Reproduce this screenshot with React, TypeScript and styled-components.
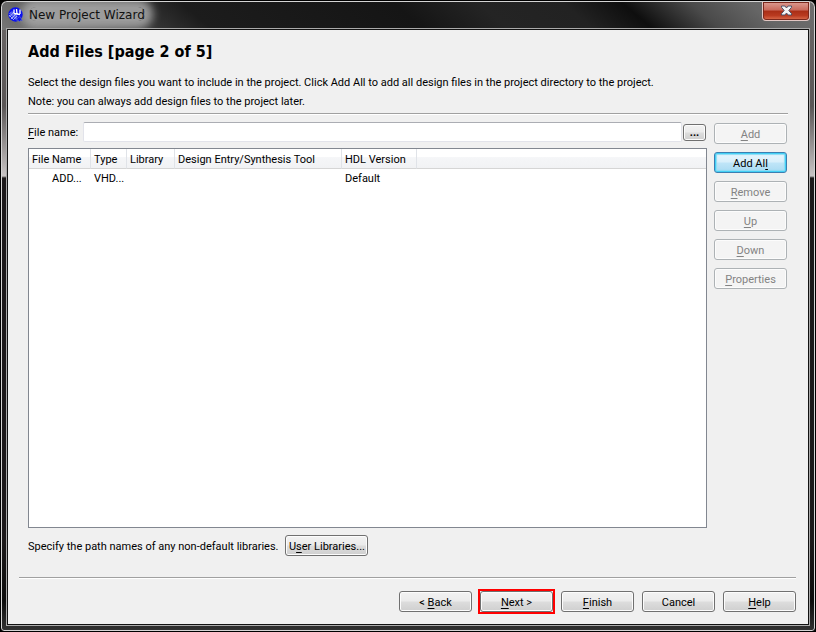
import React from 'react';
import styled, { createGlobalStyle, css } from 'styled-components';

const GlobalStyle = createGlobalStyle`
  *, *::before, *::after { box-sizing: border-box; }
  body {
    margin: 0;
    background: #000;
    color: #000;
    font: 11px/16px Roboto, Tahoma, "Noto Sans", sans-serif;
  }
  button, input { font: inherit; color: inherit; }
`;

const Window = styled.div`
  min-height: 100vh;
  display: flex;
  flex-direction: column;
  border: 1px solid #000;
  border-radius: 7px 7px 4px 4px;
  box-shadow: inset 0 0 0 1px #d4d4d4;
  padding: 1px 5px 5px;
  background:
    linear-gradient(40deg, #777 0, #555 10%, #1c1c1c 25%, #151515 50%, #242424 60%, #222 70%, #0e0e0e 77%, #4a4a4a 85%, #666 92%, #6e6e6e 100%) top / 100% 29px no-repeat,
    linear-gradient(180deg, #6c6868 0, #5a5656 105px, #c8c4c4 175px, #1c191a 177px, #1c191a 540px, #0c0c0c 600px, #333 100%);
`;

const TitleBar = styled.header`
  display: flex;
  align-items: flex-start;
  height: 26px;
  padding-left: 2px;
  overflow: hidden;
`;

const AppIcon = styled.svg`
  width: 16px;
  height: 16px;
  margin-top: 5px;
  z-index: 1;
`;

const WindowTitle = styled.div`
  flex: 1;
  display: flex;
  font-family: "DejaVu Sans", Verdana, sans-serif;
  font-size: 12px;
  line-height: 16px;
  padding: 5px 0 0 5px;
  color: #111;

  span {
    background: rgba(165, 165, 165, 0.9);
    box-shadow: 0 0 9px 8px rgba(165, 165, 165, 0.9);
    border-radius: 8px;
    height: 14px;
    line-height: 16px;
  }
`;

const CloseButton = styled.button`
  display: grid;
  place-items: center;
  width: 48px;
  height: 19px;
  padding: 0;
  border: 1px solid #e2c6c2;
  border-top: 0;
  border-radius: 0 0 4px 4px;
  box-shadow: inset 0 0 0 1px #7b281c;
  background: linear-gradient(#dc9d92 0, #c9695b 45%, #a92e16 50%, #b93a20 75%, #dc7050 100%);

  svg { width: 13px; height: 11px; margin-bottom: 2px; }
`;

const Client = styled.main`
  flex: 1;
  display: flex;
  flex-direction: column;
  padding: 1px;
  border: 1px solid #aaa;
  box-shadow: inset 0 0 0 1px #111;
  background: #f0f0f0 content-box;
`;

const Page = styled.section`
  flex: 1;
  display: flex;
  flex-direction: column;
  padding: 13px 20px 0;
`;

const Heading = styled.h1`
  margin: 0 0 13px;
  font-family: "DejaVu Sans Condensed", Tahoma, sans-serif;
  font-size: 16px;
  line-height: 18px;
  font-weight: bold;
`;

const Intro = styled.p`
  margin: 0 0 1px;
  line-height: 18px;
`;

const Rule = styled.hr`
  width: 100%;
  height: 2px;
  margin: 0;
  border: 0;
  border-top: 1px solid #a0a0a0;
  border-bottom: 1px solid #fff;
`;

const PageRule = styled(Rule)`
  margin-top: 1px;
`;

const Columns = styled.div`
  flex: 1;
  display: flex;
  gap: 7px;
  padding-top: 7px;
`;

const Files = styled.div`
  flex: 1;
  display: flex;
  flex-direction: column;
  gap: 6px;
`;

const FileRow = styled.div`
  display: flex;
  align-items: center;
  height: 20px;
  padding-right: 1px;

  label { width: 55px; padding-top: 2px; white-space: nowrap; }
`;

const FileInput = styled.input`
  flex: 1;
  min-width: 0;
  height: 20px;
  padding: 0 4px;
  border: 1px solid #e2e3ea;
  border-top-color: #abadb3;
  border-radius: 2px;
  background: #fff;
`;

const ListFrame = styled.div`
  flex: 1;
  border: 1px solid #828790;
  background: #fff;
`;

const FileTable = styled.table`
  width: 100%;
  table-layout: fixed;
  border-collapse: separate;
  border-spacing: 0;

  th, td {
    padding: 2px 0 0 3px;
    text-align: left;
    font-weight: normal;
    white-space: nowrap;
    overflow: hidden;
  }
  th {
    height: 20px;
    padding-top: 3px;
    border-right: 1px solid #e0e3e8;
    border-bottom: 1px solid #d5d5d5;
    background: linear-gradient(#fff 40%, #f5f6f8 45%, #f1f2f4);
  }
  th:last-child { border-right: 0; }
  td { height: 18px; }
  td:first-child { padding-left: 23px; }
`;

const Col = styled.col<{ $width?: number }>`
  ${({ $width }) => $width && css`width: ${$width}px;`}
`;

const Actions = styled.div`
  display: flex;
  flex-direction: column;
  gap: 8px;
  padding: 1px 1px 0 0;
`;

const Button = styled.button<{ $kind?: 'hot' | 'fit' | 'browse' }>`
  display: block;
  width: 73px;
  height: 21px;
  padding: 2px 0 0;
  line-height: 16px;
  white-space: nowrap;
  border: 1px solid #707070;
  border-radius: 3px;
  box-shadow: inset 0 0 0 1px #fcfcfc;
  background: linear-gradient(#f2f2f2 0, #ebebeb 48%, #dddddd 52%, #cfcfcf 100%);

  &:disabled {
    color: #838383;
    border-color: #adb2b5;
    background: #f4f4f4;
  }
  ${({ $kind }) => $kind === 'hot' && css`
    border-color: #3c7fb1;
    box-shadow: inset 0 0 0 1px #43d0f5, inset 0 0 1px 2px #8bdcf5;
    background: linear-gradient(#e8f5fc 0, #d8effb 48%, #bfe5f8 52%, #a9daf2 100%);
  `}
  ${({ $kind }) => $kind === 'fit' && css`width: 83px;`}
  ${({ $kind }) => $kind === 'browse' && css`
    width: 23px;
    height: 17px;
    margin-left: 1px;
    line-height: 12px;
    font-weight: bold;
  `}
`;

const Highlight = styled.div`
  outline: 2px solid #f00;
`;

const Key = styled.span`
  text-decoration: underline;
  text-underline-offset: 2px;
`;

const Libraries = styled.div`
  display: flex;
  align-items: center;
  gap: 7px;
  padding: 7px 0 21px;
`;

const LibrariesText = styled.span`
  padding-top: 2px;
`;

const Footer = styled.footer`
  padding: 0 12px 12px 11px;
`;

const FooterButtons = styled.div`
  display: flex;
  justify-content: flex-end;
  gap: 8px;
  padding-top: 12px;
`;

const columns = [
  { name: 'File Name', width: 62 },
  { name: 'Type', width: 36 },
  { name: 'Library', width: 48 },
  { name: 'Design Entry/Synthesis Tool', width: 167 },
  { name: 'HDL Version', width: 75 },
];

const withKey = (text: string, index: number) => (
  <>{text.slice(0, index)}<Key>{text[index]}</Key>{text.slice(index + 1)}</>
);

export default function App() {
  return (
    <>
      <GlobalStyle />
      <Window>
        <TitleBar>
          <AppIcon viewBox="0 0 16 16" aria-hidden="true">
            <circle cx="7.500" cy="7.500" r="7.200" fill="#0c12ee" />
            <path d="M1.500 6l6.500 6.500M2.500 5l7 7M1 8l5 5M4 4.500l5 5M1.500 10L6 5M3 12l6-6M6 12l3-3" stroke="#a9b6f6" strokeWidth=".9" fill="none" />
            <path d="M6 2.500v4M8.500 2l.5 5M12 2.500v4.500M6 6.500l6 1" stroke="#fff" strokeWidth="1.300" fill="none" />
            <path d="M9 11.500l3-2 2.500 4.500-2-.5-1 1.500-1-1.500-1.500.5z" fill="#0c12ee" stroke="#7785b8" strokeWidth=".5" />
          </AppIcon>
          <WindowTitle><span>New Project Wizard</span></WindowTitle>
          <CloseButton aria-label="Close">
            <svg viewBox="0 0 13 11" aria-hidden="true">
              <path d="M1.500 1h3.400l1.600 2 1.600-2h3.400v1.300L8.800 5.500l2.700 3.200V10H8.100L6.500 8 4.900 10H1.500V8.700L4.200 5.500 1.500 2.300z" fill="#f4f4f4" stroke="#4b5268" />
            </svg>
          </CloseButton>
        </TitleBar>
        <Client>
          <Page>
            <Heading>Add Files [page 2 of 5]</Heading>
            <Intro>Select the design files you want to include in the project. Click Add All to add all design files in the project directory to the project.</Intro>
            <Intro>Note: you can always add design files to the project later.</Intro>
            <PageRule />
            <Columns>
              <Files>
                <FileRow>
                  <label htmlFor="file-name">{withKey('File name:', 0)}</label>
                  <FileInput id="file-name" type="text" />
                  <Button $kind="browse" aria-label="Browse">...</Button>
                </FileRow>
                <ListFrame>
                  <FileTable>
                    <colgroup>
                      {columns.map((c) => <Col key={c.name} $width={c.width} />)}
                      <Col />
                    </colgroup>
                    <thead>
                      <tr>
                        {columns.map((c) => <th key={c.name} scope="col">{c.name}</th>)}
                        <th aria-hidden="true" />
                      </tr>
                    </thead>
                    <tbody>
                      <tr>
                        <td>ADD...</td>
                        <td>VHD...</td>
                        <td />
                        <td />
                        <td>Default</td>
                        <td />
                      </tr>
                    </tbody>
                  </FileTable>
                </ListFrame>
              </Files>
              <Actions>
                <Button disabled>{withKey('Add', 0)}</Button>
                <Button $kind="hot">{withKey('Add All', 6)}</Button>
                <Button disabled>{withKey('Remove', 0)}</Button>
                <Button disabled>{withKey('Up', 0)}</Button>
                <Button disabled>{withKey('Down', 0)}</Button>
                <Button disabled>{withKey('Properties', 0)}</Button>
              </Actions>
            </Columns>
            <Libraries>
              <LibrariesText>Specify the path names of any non-default libraries.</LibrariesText>
              <Button $kind="fit">{withKey('User Libraries...', 1)}</Button>
            </Libraries>
          </Page>
          <Footer>
            <Rule />
            <FooterButtons>
              <Button>{withKey('< Back', 2)}</Button>
              <Highlight><Button>{withKey('Next >', 0)}</Button></Highlight>
              <Button>{withKey('Finish', 0)}</Button>
              <Button>Cancel</Button>
              <Button>{withKey('Help', 0)}</Button>
            </FooterButtons>
          </Footer>
        </Client>
      </Window>
    </>
  );
}
